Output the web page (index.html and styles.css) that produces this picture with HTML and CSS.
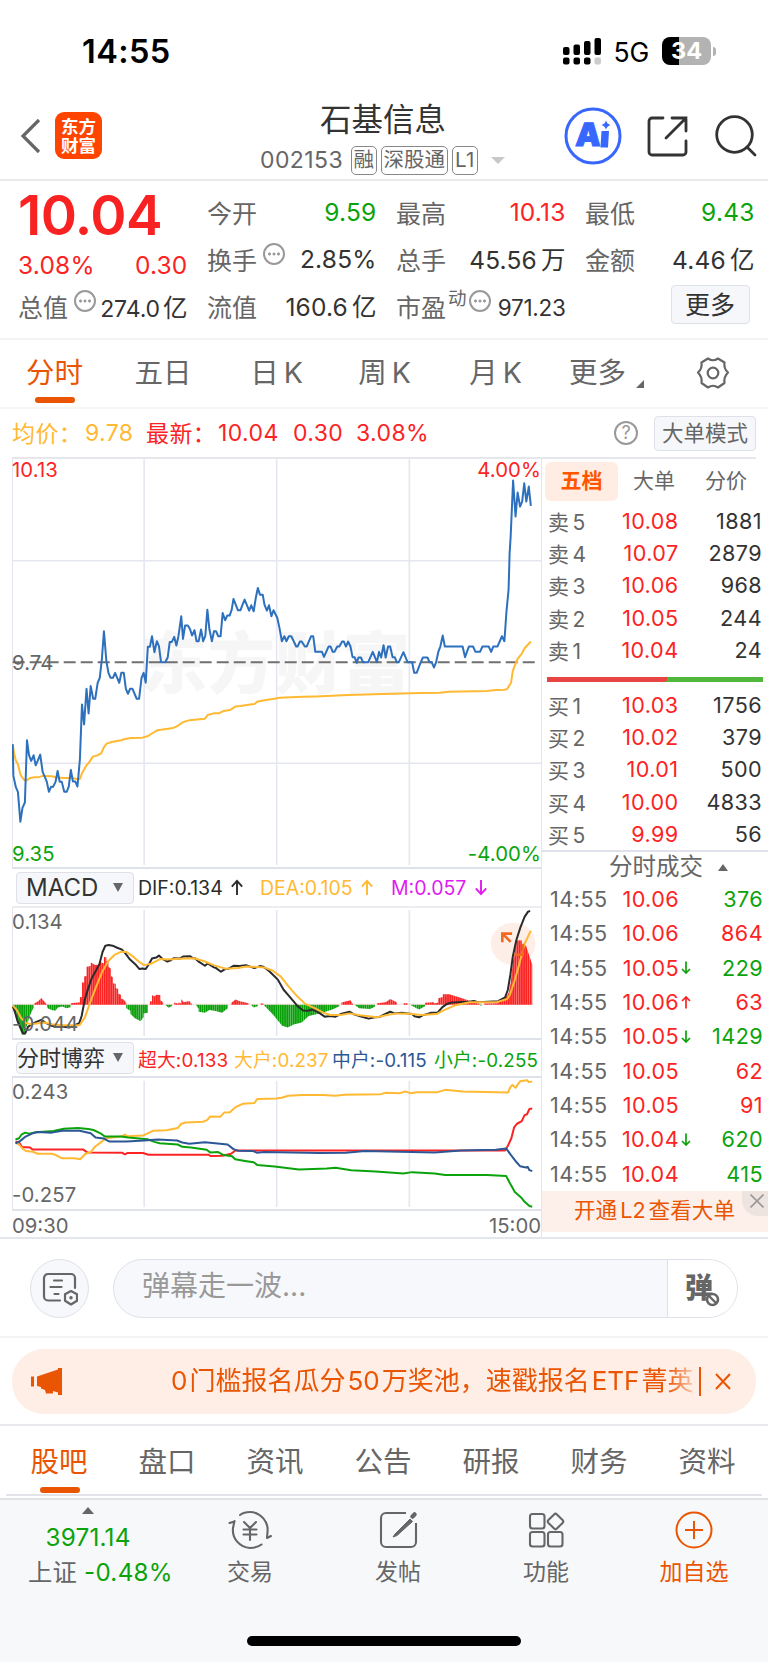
FILE: index.html
```html
<!DOCTYPE html>
<html lang="zh-CN">
<head>
<meta charset="utf-8">
<title>石基信息 002153</title>
<link rel="stylesheet" href="styles.css">
</head>
<body>
<div class="app">
  <div class="status">
    <span class="clock">14:55</span>
    <svg class="signal" width="39" height="27" viewBox="0 0 39 27">
      <g fill="#000"><rect x="0" y="9" width="6.5" height="8" rx="2"/><rect x="10.5" y="6.500" width="6.500" height="10.500" rx="2"/><rect x="21" y="3" width="6.500" height="14" rx="2"/><rect x="31.500" y="0" width="6.500" height="17" rx="2"/>
      <rect x="0" y="19.500" width="6.500" height="7" rx="2"/><rect x="10.500" y="19.500" width="6.500" height="7" rx="2"/><rect x="21" y="19.500" width="6.500" height="7" rx="2"/></g>
      <rect x="31.500" y="19.500" width="6.500" height="7" rx="2" fill="#ccc"/>
    </svg>
    <span class="net">5G</span>
    <span class="battery">34</span><i class="battery-cap"></i>
  </div>

  <header class="nav">
    <svg class="back" width="22" height="36" viewBox="0 0 22 36"><path d="M19 2 3 18l16 16" fill="none" stroke="#666" stroke-width="3.200"/></svg>
    <div class="logo"><span>东方</span><span>财富</span></div>
    <div class="title">
      <h1>石基信息</h1>
      <div class="sub"><span class="code">002153</span><b>融</b><b>深股通</b><b>L1</b><i></i></div>
    </div>
    <div class="nav-icons">
      <svg width="58" height="58" viewBox="0 0 58 58"><circle cx="29" cy="29" r="27" fill="none" stroke="#3767ff" stroke-width="3"/>
        <text class="ai" x="11" y="39.500" transform="skewX(-3) translate(2 0)">A</text>
        <path d="M37.500 24h7.500l-1 16.500h-7.500z" fill="#3767ff"/><path d="M42 13.500q1 3.500 4.500 4.500-3.500 1-4.500 4.500-1-3.500-4.500-4.500 3.500-1 4.500-4.500z" fill="#3767ff"/></svg>
      <svg class="share" width="42" height="42" viewBox="0 0 42 42"><path d="M16 3H5a3 3 0 0 0-3 3v31a3 3 0 0 0 3 3h31a3 3 0 0 0 3-3V26M39 16V3H25M39 3 19 23" fill="none" stroke="#333" stroke-width="2.800" stroke-linecap="round"/></svg>
      <svg class="search" width="42" height="42" viewBox="0 0 42 42"><circle cx="19.500" cy="19.500" r="17.800" fill="none" stroke="#333" stroke-width="2.800"/><path d="m32 32 8 8" stroke="#333" stroke-width="2.800" stroke-linecap="round"/></svg>
    </div>
  </header>

  <section class="quote">
    <div class="cell price">10.04</div>
    <div class="cell"><label>今开</label><span class="g">9.59</span></div>
    <div class="cell"><label>最高</label><span class="r">10.13</span></div>
    <div class="cell"><label>最低</label><span class="g">9.43</span></div>
    <div class="cell change r"><span>3.08%</span><span>0.30</span></div>
    <div class="cell"><label>换手<i class="dots"></i></label><span>2.85%</span></div>
    <div class="cell"><label>总手</label><span>45.56<em>万</em></span></div>
    <div class="cell"><label>金额</label><span>4.46<em>亿</em></span></div>
    <div class="cell"><label>总值<i class="dots"></i></label><span class="tight">274.0<em>亿</em></span></div>
    <div class="cell"><label>流值</label><span>160.6<em>亿</em></span></div>
    <div class="cell"><label>市盈<sup>动</sup><i class="dots near"></i></label><span class="small">971.23</span></div>
    <div class="cell end"><button class="more">更多</button></div>
  </section>

  <nav class="periods">
    <a class="on">分时</a><a>五日</a><a>日<s></s>K</a><a>周<s></s>K</a><a>月<s></s>K</a><a class="menu">更多</a>
    <a><svg width="34" height="34" viewBox="0 0 34 34" fill="none" stroke="#666" stroke-width="2.200" stroke-linejoin="round"><path d="M12 2.500Q17 6 22 2.500L28.500 6.500Q27.500 12.500 32 16.500Q27.500 21 28.500 27L22 31.500Q17 28 12 31.500L5.500 27Q6.500 21 2 16.500Q6.500 12.500 5.500 6.500Z"/><circle cx="17" cy="17" r="5.300"/></svg></a>
  </nav>

  <div class="info">
    <span class="y c">均价：</span><span class="y v1">9.78</span><span class="r c v2">最新：</span><span class="r v3">10.04</span><span class="r v4">0.30</span><span class="r v5">3.08%</span>
    <span class="help">?</span><button class="mode">大单模式</button>
  </div>

  <main class="market">
    <div class="charts">
      <div class="chart main-chart">
        <div class="watermark">东方财富</div>
        <svg class="plot" viewBox="36 -519 1522 1233" preserveAspectRatio="none">
          <path class="grid" d="M36-207H1558M36 402H1558M415.500-512V708M796-512V708M1177-512V708"/>
          <path class="dash" d="M38 98H1548"/>
          <path class="line y" d="M38 345 42 372 47 394 53 405 60 435 66 446 73 454 79 453 86 447 100 444 115 443 125 440 150 441 165 445 186 446 210 446 220 449 231 449 237 432 250 408 257 400 268 382 280 379 292 372 301 352 308 343 322 338 350 333 360 329 378 326 410 325 425 321 440 311 453 303 495 297 508 292 528 278 545 273 590 268 598 257 615 252 630 252 643 245 662 242 678 231 692 230 710 227 732 224 742 216 765 212 785 209 805 205 870 202 910 201 1000 197 1100 194 1210 191 1265 190 1290 187 1400 185 1425 182 1450 181 1458 179 1469 160 1474 125 1481 105 1488 88 1500 72 1508 56 1518 45 1526 36"/>
          <path class="line blue" d="M38 345 40 440 47 474 53 488 60 578 66 536 73 520 79 333 85 378 91 395 98 378 104 408 110 394 117 376 124 428 130 442 136 458 142 488 148 473 154 473 161 458 167 425 173 458 179 458 186 488 193 488 199 472 205 422 211 457 218 457 224 472 231 390 237 225 243 285 250 178 256 252 262 170 269 208 275 208 282 160 288 145 294 90 300 5 307 95 313 130 319 145 326 145 332 130 344 160 350 130 357 130 363 178 369 193 375 178 382 178 394 208 401 208 408 145 414 130 420 160 426 52 432 52 438 20 445 68 452 35 458 50 464 98 476 98 483 84 489 37 495 37 502 22 508 48 514 20 522-40 527 28 533-12 541-12 547-2 553 18 560 2 566 35 572 35 579 0 585 35 591 20 597-60 603 0 610 35 616 5 622 5 628 20 635 20 641-50 648-28 654-42 661-42 667-60 672-92 685-58 692-58 698-75 704-90 717-57 723-73 730-55 736-95 742-125 748-105 756-105 761-75 768-57 774-73 781-40 787-58 798-35 804-5 811 35 818 20 824 35 831 20 838 20 845 35 852 51 856 51 863 36 868 36 877 51 882 51 895 20 901 20 907 67 926 67 932 82 945 51 951 51 957 67 962 67 970 51 976 51 984 36 989 36 995 51 1001 36 1008 51 1014 83 1020 83 1026 100 1031 84 1038 84 1044 98 1059 98 1072 67 1084 98 1090 67 1096 84 1103 47 1109 84 1116 51 1122 51 1129 83 1135 83 1141 98 1147 98 1160 68 1172 98 1185 98 1191 130 1198 130 1210 98 1216 84 1229 84 1235 98 1241 98 1248 114 1254 98 1260 68 1266 51 1273 18 1279 51 1330 51 1337 83 1348 51 1360 51 1367 67 1380 67 1387 51 1405 51 1412 67 1418 51 1430 51 1443 20 1450 35 1456-55 1462-120 1465-230 1468-280 1475-448 1482-340 1488-412 1495-370 1501-385 1507-440 1513-385 1520-430 1526-372"/>
        </svg>
        <span class="lab tl r">10.13</span><span class="lab tr r">4.00%</span><span class="lab mid">9.74</span><span class="lab bl g">9.35</span><span class="lab br g">-4.00%</span>
      </div>
      <div class="legend">
        <button class="pick">MACD<i></i></button><span class="k l1">DIF:0.134 <svg class="ar" viewBox="0 0 14 18"><path d="M7 17V2M1.500 8 7 2l5.500 6"/></svg></span><span class="y l2">DEA:0.105 <svg class="ar" viewBox="0 0 14 18"><path d="M7 17V2M1.500 8 7 2l5.500 6"/></svg></span><span class="m l3">M:0.057 <svg class="ar" viewBox="0 0 14 18"><path d="M7 1v15M1.500 10 7 16l5.500-6"/></svg></span>
      </div>
      <div class="chart macd">
        <svg class="plot" viewBox="36 141 1522 396" preserveAspectRatio="none">
          <defs>
            <pattern id="up" width="6.240" height="600" patternUnits="userSpaceOnUse" x="38"><rect width="5.500" height="600" fill="#fb2222"/></pattern>
            <pattern id="down" width="6.240" height="600" patternUnits="userSpaceOnUse" x="38"><rect width="5.500" height="600" fill="#08a008"/></pattern>
          </defs>
          <path class="grid" d="M415.500 147V531M796 147V531M1177 147V531"/>
          <circle cx="1475" cy="250" r="64" fill="#fdeee7"/>
          <path d="M38 434H1532" stroke="#fbb" stroke-width="1.500"/>
          <path fill="url(#up)" d="M100 436V432L112 424 120 415 132 430 136 436ZM205 436V431L231 428V413L237 412V368H243V350L250 348V320L262 318V307L275 315 287 313V305L300 310V290L307 291V303H313V321L320 325V348L326 352V370L334 372V385L341 388V402L349 405V417L356 420 364 430V436ZM432 436V425H438V407L445 410 451 405 462 406V422L470 428V436ZM502 436V429L514 433V429L522 432V418L529 428 545 424 553 434V436ZM666 436V430L678 420 688 424 715 431V436ZM750 436V432H758V436ZM982 436V429L1008 422 1016 436ZM1084 436V431L1109 428 1122 418 1141 428V436ZM1160 436V431H1172V436ZM1222 436V430L1248 428V432L1260 429V416L1273 412V404L1292 404 1335 418 1380 434V436ZM1392 436V432L1430 431 1455 412 1462 400 1468 370 1475 300 1481 280V245L1488 239 1500 240V252L1512 255 1522 288 1530 312V436Z"/>
          <path fill="url(#down)" d="M38 436H98V444L91 460 85 475 79 498 73 515V526H64L52 490 45 465ZM136 436H204V443L192 446 180 441 168 444 160 454 150 452 138 446ZM364 436H426V460L414 462V473L405 486 388 476 376 463V454L364 446ZM476 436H496V439L486 445ZM564 436H656V446L639 460 620 455 603 452 590 460 572 457V448ZM722 436H742V440L730 444ZM758 436H976V440L956 450 920 462 888 470 868 490 845 496 828 505 812 500 798 482 786 466ZM1020 436H1078V442L1064 449 1033 446ZM1180 436H1222V440L1205 450 1192 443ZM1380 436H1386V438H1380Z"/>
          <path class="line k" d="M38 440 45 460 52 486 60 505 68 523 74 523 82 503 93 495 106 488 120 482 132 490 150 500 165 503 180 502 200 505 215 499 229 492 236 470 245 420 255 385 265 355 278 330 287 312 296 275 304 256 314 254 328 257 338 262 352 268 362 280 375 298 390 312 402 327 410 325 420 327 430 311 438 295 450 292 458 286 467 295 482 304 492 300 500 294 518 295 527 289 548 288 556 294 562 294 570 303 590 317 598 310 616 322 622 324 636 335 647 328 660 325 672 317 690 318 708 315 732 324 748 318 758 320 774 333 786 345 800 360 816 390 830 407 844 425 856 440 872 453 886 454 898 450 915 458 934 472 950 470 965 472 980 464 1006 457 1018 465 1036 471 1060 478 1078 474 1092 473 1104 466 1122 457 1134 462 1155 460 1172 462 1185 464 1192 471 1205 474 1215 468 1240 460 1258 460 1272 443 1284 434 1298 429 1330 427 1345 427 1362 424 1375 428 1432 425 1452 413 1460 390 1467 345 1474 290 1484 240 1496 200 1508 168 1518 152 1524 150"/>
          <path class="line y" d="M38 438 50 452 62 476 76 491 90 495 130 490 150 495 180 498 230 498 245 475 260 430 278 380 295 335 312 303 330 284 350 274 365 275 385 290 400 304 415 315 435 311 462 296 480 298 530 295 560 294 590 304 615 315 650 326 685 324 710 319 760 322 785 332 808 350 830 380 855 410 878 433 905 446 930 460 950 467 980 467 1005 462 1035 468 1085 474 1110 468 1140 462 1180 463 1210 467 1255 464 1275 453 1310 437 1350 428 1430 427 1458 418 1466 405 1480 360 1492 315 1508 250 1526 210"/>
          <path d="M1444 245V219H1472M1445 220 1468 244M1503 250V283H1478" fill="none" stroke="#f26a20" stroke-width="2.600" vector-effect="non-scaling-stroke"/>
        </svg>
        <span class="lab tl">0.134</span><span class="lab bl low">-0.044</span>
      </div>
      <div class="legend second">
        <button class="pick cjk">分时博弈<i></i></button><span class="r s1">超大:0.133</span><span class="y s2">大户:0.237</span><span class="n s3">中户:-0.115</span><span class="g s4">小户:-0.255</span>
      </div>
      <div class="chart game">
        <svg class="plot" viewBox="36 112 1522 398" preserveAspectRatio="none">
          <path class="grid" d="M415.500 120V504M796 120V504M1177 120V504"/>
          <path class="line r" d="M46 305 57 309 65 322 88 323 95 329 240 329 252 338 352 339 360 344 367 340 412 340 428 345 600 345 606 349 640 348 665 342 678 332 1452 332 1460 318 1470 295 1478 262 1486 251 1500 243 1508 225 1515 222 1522 206 1530 205"/>
          <path class="line y" d="M46 308 55 313 65 325 76 334 96 336 110 342 150 342 162 346 180 356 215 356 232 359 246 343 262 337 275 320 292 307 305 295 350 290 360 284 367 289 412 287 430 278 442 272 480 271 512 264 522 251 535 247 585 245 597 239 605 229 634 230 645 217 662 216 676 202 685 197 700 190 732 188 740 176 795 174 810 172 830 166 870 164 930 164 965 166 990 163 1095 161 1110 157 1150 158 1165 153 1180 158 1200 155 1258 155 1280 148 1330 153 1460 156 1467 140 1473 133 1482 142 1495 122 1515 119 1520 124 1530 123"/>
          <path class="line g" d="M46 299 56 295 64 283 74 278 85 281 105 277 155 273 185 266 225 264 255 267 270 270 290 280 303 290 350 290 370 293 425 298 445 306 460 310 512 314 525 321 550 323 595 330 605 338 628 337 644 346 668 350 677 359 705 364 730 368 740 376 790 381 860 390 940 387 965 385 1010 392 1080 396 1160 402 1185 398 1250 402 1280 407 1400 407 1455 410 1464 428 1480 458 1498 475 1508 488 1522 501 1530 503"/>
          <path class="line n" d="M46 311 60 303 75 290 95 280 110 276 150 278 180 272 230 272 262 280 276 293 300 296 316 305 365 305 415 302 455 299 510 302 525 308 545 312 590 307 655 314 672 328 685 333 728 334 740 339 760 337 920 340 995 339 1050 334 1250 338 1325 332 1425 330 1455 326 1468 345 1485 368 1495 380 1512 384 1517 382 1522 392 1530 395"/>
        </svg>
        <span class="lab tl">0.243</span><span class="lab bl">-0.257</span>
      </div>
      <div class="times"><span>09:30</span><span>15:00</span></div>
    </div>

    <aside class="book">
      <div class="book-tabs"><a class="on">五档</a><a>大单</a><a>分价</a></div>
      <div class="levels">
        <div><label>卖<s></s>5</label><b>10.08</b><span>1881</span></div>
        <div><label>卖<s></s>4</label><b>10.07</b><span>2879</span></div>
        <div><label>卖<s></s>3</label><b>10.06</b><span>968</span></div>
        <div><label>卖<s></s>2</label><b>10.05</b><span>244</span></div>
        <div><label>卖<s></s>1</label><b>10.04</b><span>24</span></div>
      </div>
      <div class="ratio"></div>
      <div class="levels">
        <div><label>买<s></s>1</label><b>10.03</b><span>1756</span></div>
        <div><label>买<s></s>2</label><b>10.02</b><span>379</span></div>
        <div><label>买<s></s>3</label><b>10.01</b><span>500</span></div>
        <div><label>买<s></s>4</label><b>10.00</b><span>4833</span></div>
        <div><label>买<s></s>5</label><b>9.99</b><span>56</span></div>
      </div>
      <div class="deals-head">分时成交<i></i></div>
      <div class="deals">
        <div><time>14:55</time><b>10.06</b><span class="g">376</span></div>
        <div><time>14:55</time><b>10.06</b><span class="r">864</span></div>
        <div><time>14:55</time><b>10.05</b><svg class="g" viewBox="0 0 10 13"><path d="M5 .500V12M1 8l4 4 4-4"/></svg><span class="g">229</span></div>
        <div><time>14:55</time><b>10.06</b><svg class="r" viewBox="0 0 10 13"><path d="M5 12.500V1M1 5l4-4 4 4"/></svg><span class="r">63</span></div>
        <div><time>14:55</time><b>10.05</b><svg class="g" viewBox="0 0 10 13"><path d="M5 .500V12M1 8l4 4 4-4"/></svg><span class="g">1429</span></div>
        <div><time>14:55</time><b>10.05</b><span class="r">62</span></div>
        <div><time>14:55</time><b>10.05</b><span class="r">91</span></div>
        <div><time>14:55</time><b>10.04</b><svg class="g" viewBox="0 0 10 13"><path d="M5 .500V12M1 8l4 4 4-4"/></svg><span class="g">620</span></div>
        <div><time>14:55</time><b>10.04</b><span class="g">415</span></div>
      </div>
      <div class="l2">开通<s></s>L2<s></s>查看大单<i><svg width="14" height="14" viewBox="0 0 14 14"><path d="m.500.500 13 13M13.500.500l-13 13" stroke="#999" stroke-width="1.600"/></svg></i></div>
    </aside>
  </main>

  <section class="danmu">
    <div class="round"><svg width="36" height="34" viewBox="0 0 36 34" fill="none" stroke="#666" stroke-width="2.200" stroke-linecap="round"><path d="M18 28.500H6a4 4 0 0 1-4-4V6a4 4 0 0 1 4-4h23a4 4 0 0 1 4 4v10M12 8.500h8M8.500 15h11M12.500 22h4"/><path d="m29 19 6 3.300v6.400L29 32.500l-6-3.800v-6.400z" stroke-linejoin="round"/><circle cx="29" cy="25.700" r="1" fill="#666" stroke-width="1.500"/></svg></div>
    <div class="input"><span>弹幕走一波...</span><div class="toggle">弹<svg width="15" height="15" viewBox="0 0 15 15"><circle cx="7.500" cy="7.500" r="5.500" fill="#fff" stroke="#666" stroke-width="2.600"/><path d="m4 4 7 7" stroke="#666" stroke-width="2.400"/></svg></div></div>
  </section>

  <section class="notice-wrap">
    <div class="notice">
      <svg class="horn" width="32" height="27" viewBox="0 0 32 27" fill="#ea5504"><path d="M0 8.500h3v10H0zM6 8.500 27 1.500V0h4v27h-4v-2.500L22 23v2.500h-7L14 22l-4-1.500V19l-4-1z"/></svg>
      <div class="marquee">0<s></s>门槛报名瓜分<s></s>50<s></s>万奖池，速戳报名<s></s>ETF<s></s>菁英</div>
      <i class="bar"></i>
      <svg class="close" width="16" height="17" viewBox="0 0 16 17"><path d="m1 1 14 15M15 1 1 16" stroke="#ea5504" stroke-width="2"/></svg>
    </div>
  </section>

  <nav class="sections"><a class="on">股吧</a><a>盘口</a><a>资讯</a><a>公告</a><a>研报</a><a>财务</a><a>资料</a></nav>

  <footer class="bottom">
    <div class="index"><i></i><div class="g num">3971.14</div><div class="row">上证<span class="g">-0.48%</span></div></div>
    <a><svg width="44" height="40" viewBox="0 0 44 40" fill="none" stroke="#666" stroke-width="2.100" stroke-linecap="round"><path d="M12 5Q16 2 22 2a18 18 0 0 1 17.500 20l-.500 6M39 28l4-2M33.500 34.500Q29 38 22 38A18 18 0 0 1 5 18l1.500-7M6.500 11.500 1.500 13"/><path d="m16 12 6 6 6-6M22 18v12M15.500 19.500h13M15.500 24.500h13"/></svg>交易</a>
    <a><svg width="40" height="40" viewBox="0 0 40 40" fill="none" stroke="#666" stroke-width="2.100"><path d="M28 3H8a5 5 0 0 0-5 5v24a5 5 0 0 0 5 5h25a5 5 0 0 0 5-5V13"/><path d="m17 24 15-15 2.500 2.500L19 25.500l-4 1.500z" fill="#666" stroke-width="1"/><path d="m34.500 6.500 2-2" stroke-width="4.500" stroke-linecap="round"/></svg>发帖</a>
    <a><svg width="40" height="40" viewBox="0 0 40 40" fill="none" stroke="#666" stroke-width="2.100"><rect x="4" y="4" width="14.500" height="14.500" rx="2.500"/><rect x="4" y="22" width="14.500" height="14.500" rx="2.500"/><rect x="22" y="22" width="14.500" height="14.500" rx="2.500"/><rect x="23.500" y="5.500" width="12" height="12" rx="2" transform="rotate(45 29.500 11.500)"/></svg>功能</a>
    <a class="add"><svg width="40" height="40" viewBox="0 0 40 40" fill="none" stroke="#ea5504" stroke-width="2"><circle cx="20" cy="20" r="17.500"/><path d="M11 20h18M20 11v18"/></svg>加自选</a>
    <div class="home"></div>
  </footer>
</div>
</body>
</html>
```
FILE: styles.css
```css
* { box-sizing: border-box; }
body { margin: 0; background: #fff; }
.app { width: 768px; height: 1663px; overflow: hidden; font-family: "Inter", "Noto Sans CJK SC", sans-serif; color: #333; display: flex; flex-direction: column; }
.app > * { flex: none; }
h1, b, i, em { font-weight: 400; font-style: normal; margin: 0; }
s { display: inline-block; width: 5px; }
button { font: inherit; padding: 0; color: #333; background: #f6f7fa; border: 1.5px solid #dfe1e8; border-radius: 4px; }
.r { color: #fb2323; }
.g { color: #0ba30b; }
.y { color: #ffb932; }
.k { color: #2b2b2b; }
.m { color: #df1bef; }
.n { color: #2c5797; }

/* status bar */
.status { height: 102px; padding: 0 52px 0 82px; display: flex; align-items: center; }
.clock { font-size: 32.5px; font-weight: 600; color: #000; letter-spacing: .4px; padding-top: 1px; }
.signal { margin-left: auto; }
.net { margin: 0 13px 0 12px; font-size: 26.5px; color: #000; letter-spacing: -.2px; padding-top: 1px; }
.battery { width: 49px; height: 28px; border-radius: 8px; background: linear-gradient(90deg, #000 17px, #b3b3b3 17px); color: #fff; font-size: 23.5px; font-weight: 700; line-height: 28px; text-align: center; }
.battery-cap { width: 3px; height: 9px; margin-left: 2px; background: #b3b3b3; border-radius: 0 4px 4px 0; }

/* nav */
.nav { height: 79px; border-bottom: 2px solid #ebebec; display: flex; position: relative; padding-left: 20px; }
.back { margin-top: 16px; }
.logo { width: 47px; height: 47px; margin: 10px 0 0 13px; background: #ff4400; border-radius: 9px; color: #fff; font-size: 17.5px; font-weight: 700; line-height: 19px; display: flex; flex-direction: column; align-items: center; justify-content: center; }
.title { width: 246px; margin-left: 158px; }
.title h1 { font-size: 31.5px; line-height: 35px; text-align: center; letter-spacing: 0; }
.sub { display: flex; align-items: center; height: 30px; margin-top: 8px; color: #666; font-size: 22px; }
.code { font-size: 23px; margin-right: 5px; width: 86px; letter-spacing: .4px; }
.sub b { height: 29px; border: 1.5px solid #888; border-radius: 5px; font-size: 20.5px; line-height: 25px; padding: 0 1.5px; margin-right: 4px; flex: none; }
.sub b:nth-of-type(2) { padding: 0 2px; }
.sub b:nth-of-type(3) { padding: 0 2px; letter-spacing: .3px; }
.sub i { border: 7px solid transparent; border-top: 7px solid #c8c8c8; border-bottom: 0; margin-left: 9px; }
.nav-icons { display: flex; margin-left: 58px; margin-top: 5px; }
.ai { font: 900 32px "Inter", sans-serif; fill: #3767ff; stroke: #3767ff; stroke-width: 1px; }
.share { margin: 8px 0 0 25px; }
.search { margin: 8px 0 0 26px; }

/* quote */
.quote { height: 159px; border-bottom: 2px solid #f3f3f4; padding: 7px 13px 0 18px; display: grid; grid-template-columns: repeat(4, 169.5px); grid-template-rows: 47px 47px 47px; column-gap: 19.5px; font-size: 24.5px; }
.cell { display: flex; justify-content: space-between; align-items: center; white-space: nowrap; }
.cell label { font-size: 25px; color: #666; display: flex; align-items: center; }
.cell > span { letter-spacing: .2px; }
.cell em { margin-left: 4px; font-size: 24.5px; letter-spacing: 0; }
.cell.price { font-size: 55px; font-weight: 600; color: #f92222; letter-spacing: -.6px; padding-top: 7px; }
.cell.change { padding-top: 13px; }
.cell .tight { font-size: 23px; letter-spacing: -.1px; padding-top: 2px; }
.cell .tight em { margin-left: 3px; }
.cell .small { font-size: 22.5px; padding-top: 4px; letter-spacing: -.3px; }
.cell.end { justify-content: flex-end; padding-right: 5px; padding-bottom: 2px; }
.cell sup { font-size: 18.5px; line-height: 18px; margin: -16px 0 0 2px; }
.dots { width: 22px; height: 22px; border: 2px solid #999; border-radius: 50%; margin: -9px 0 0 6px; background: radial-gradient(circle, #999 1.3px, transparent 1.8px) center / 4.5px 18px repeat-x; background-clip: content-box; padding: 0 2px; }
.dots.near { margin-left: 2px; }
.more { width: 79px; height: 39px; font-size: 25px; line-height: 34px; }

/* periods */
.periods { height: 69px; border-bottom: 2px solid #f5f5f6; display: grid; grid-template-columns: 109px 108px 119px 97px 125px 98px 112px; font-size: 28.5px; line-height: 66px; text-align: center; color: #666; }
.periods a { position: relative; height: 67px; }
.periods svg { display: block; margin: 16px 0 0 40px; }
.periods .on, .sections .on { color: #ea5504; }
.periods .on::after, .sections .on::after { content: ""; position: absolute; width: 40px; height: 6px; border-radius: 3px; background: #ea5504; left: 35px; bottom: 4px; }
.menu { text-align: left; padding-left: 11px; }
.menu::after { content: ""; position: absolute; right: 12px; bottom: 19px; border: 4.5px solid transparent; border-right-color: #666; border-bottom-color: #666; }

/* average and last price */
.info { height: 48px; padding: 0 12px; display: flex; align-items: center; font-size: 23px; letter-spacing: .4px; white-space: nowrap; }
.info span { flex: none; }
.info .c { padding-bottom: 2px; }
.info span:first-child { width: 73px; }
.v1 { width: 61px; }
.v2 { width: 72px; }
.v3 { width: 75px; }
.v4 { width: 63px; }
.info .help { width: 24px; height: 24px; margin-left: auto; border: 2px solid #999; border-radius: 50%; font-size: 18px; line-height: 20px; text-align: center; color: #999; letter-spacing: 0; }
.mode { width: 102px; height: 35px; margin-left: 16px; font-size: 21.5px; line-height: 31px; color: #666; letter-spacing: 0; }

/* charts */
.market { height: 782px; display: flex; border-bottom: 2px solid #e4e6ee; position: relative; }
.market::before { content: ""; position: absolute; left: 12px; top: 0; width: 744px; height: 1.5px; background: #e6e7ec; }
.charts { width: 542px; padding-left: 12px; border-right: 1.5px solid #e3e6ec; }
.chart { position: relative; border-left: 1.5px solid #e3e6ec; border-bottom: 2px solid #dfe2ea; }
.main-chart { height: 412px; }
.plot { position: absolute; left: -1px; top: 0; width: 530px; height: 100%; }
.grid { stroke: #e4e7f0; stroke-width: 1.6; fill: none; vector-effect: non-scaling-stroke; }
.dash { stroke: #707070; stroke-width: 2; stroke-dasharray: 12 5; vector-effect: non-scaling-stroke; }
.line { fill: none; stroke: currentColor; stroke-width: 2; stroke-linejoin: round; vector-effect: non-scaling-stroke; }
.blue { color: #2d70bd; }
.watermark { position: absolute; left: 127px; top: 159px; font-size: 67.5px; font-weight: 900; line-height: 95px; color: #f6f6f6; white-space: nowrap; }
.lab { position: absolute; font-size: 20.3px; line-height: 24px; color: #666; letter-spacing: .1px; }
.lab.r { color: #fb2323; }
.lab.g { color: #0ba30b; }
.tl { left: -1px; top: 2px; }
.tr { right: 0; top: 2px; }
.main-chart .tl, .main-chart .tr { top: 1px; }
.mid { left: -1px; top: 194px; }
.bl { left: -1px; bottom: 1px; }
.br { right: 0; bottom: 1px; }
.legend { height: 39px; border-bottom: 2px solid #ebedf1; display: flex; align-items: center; font-size: 19.5px; white-space: nowrap; padding-left: 4px; }
.pick { width: 118px; height: 32px; margin-right: 4px; font-size: 24px; line-height: 28px; text-align: left; padding-left: 9px; position: relative; flex: none; }
.pick i { position: absolute; right: 10px; top: 10px; border: 5px solid transparent; border-top: 9px solid #666; border-bottom: 0; }
.pick.cjk { font-size: 22px; padding-left: 0; }
.ar { width: 14px; height: 17px; fill: none; stroke: currentColor; stroke-width: 2; vertical-align: -1px; margin-left: 2px; }
.l1 { width: 122px; }
.legend .l2 { width: 131px; }
.macd { height: 132px; }
.macd .low { bottom: 2px; }
.second { height: 38px; font-size: 18.8px; border-color: #dfe2ea; letter-spacing: .15px; }
.s1 { width: 96px; }
.s2 { width: 98px; }
.s3 { width: 102px; }
.game { height: 133px; }
.game .bl { bottom: 2px; }
.times { display: flex; justify-content: space-between; font-size: 20.3px; line-height: 30px; color: #666; }

/* order book */
.book { width: 226px; color: #333; }
.book-tabs { display: flex; padding: 5px 0 0 3px; font-size: 21px; line-height: 38px; color: #666; text-align: center; }
.book-tabs a { width: 72px; height: 39px; }
.book-tabs .on { color: #ff5500; background: #ffede4; border-radius: 6px; font-weight: 700; width: 73px; }
.levels { padding: 4px 6px 0 6px; font-size: 21.6px; }
.levels div { height: 32.2px; display: grid; grid-template-columns: 50px 80.5px 1fr; align-items: center; text-align: right; letter-spacing: .4px; }
.levels label { text-align: left; color: #666; font-size: 21px; }
.levels s { width: 3px; }
.levels b, .deals b { color: #fb2323; }
.ratio { height: 5px; margin: 11px 5px 3px 5px; background: linear-gradient(110deg, #e94444 55.5%, #52b83c 55.5%); }
.deals-head { height: 32px; border-top: 2px solid #dfe2ea; color: #666; font-size: 23.5px; line-height: 30px; padding-left: 67px; display: flex; }
.deals-head i { border: 5px solid transparent; border-bottom: 7px solid #666; border-top: 0; height: 7px; margin: 12px 0 0 15px; }
.deals { height: 309px; padding: 0 5px 0 8px; font-size: 21.6px; }
.deals div { height: 34.35px; display: flex; align-items: center; letter-spacing: .4px; }
.deals time { color: #666; width: 56px; letter-spacing: .5px; }
.deals b { width: 73px; text-align: right; }
.deals span { margin-left: auto; }
.deals svg { width: 10px; height: 13px; margin-left: 2px; fill: none; stroke: currentColor; stroke-width: 1.7; }
.book .l2 { height: 41px; background: #fdf0ea; color: #ea5504; font-size: 21.6px; line-height: 38px; padding-left: 32px; position: relative; }
.l2 s { width: 3px; }
.l2 i { position: absolute; right: 0; top: 0; width: 26px; height: 25px; background: #ede3df; border-bottom-left-radius: 16px; display: flex; align-items: center; justify-content: center; padding: 0 0 4px 4px; }

/* comments */
.danmu { height: 99px; border-bottom: 2px solid #f4f4f5; display: flex; align-items: flex-start; padding: 20px 30px; }
.round { width: 59px; height: 59px; border: 1.5px solid #dfe1e8; border-radius: 50%; background: #f7f8fb; display: flex; align-items: center; justify-content: center; }
.input { width: 625px; height: 59px; margin-left: 24px; border: 1.5px solid #dfe1e8; border-radius: 30px; background: #f7f8fb; color: #999; font-size: 28px; line-height: 52px; padding-left: 28px; display: flex; justify-content: space-between; overflow: hidden; }
.toggle { width: 70px; background: #fff; border-left: 1.5px solid #dfe1e8; color: #666; font-weight: 900; font-size: 28px; line-height: 56px; padding-left: 17px; position: relative; }
.toggle svg { position: absolute; left: 37px; top: 32px; }

/* notice */
.notice-wrap { height: 88px; border-bottom: 2px solid #e8e9ed; padding: 11px 12px; }
.notice { height: 65px; border-radius: 32px; background: #feeee6; display: flex; align-items: center; padding-left: 19px; color: #ea5504; }
.marquee { width: 527px; margin-left: 108px; font-size: 26px; line-height: 40px; padding-bottom: 2px; white-space: nowrap; -webkit-mask-image: linear-gradient(90deg, #000 497px, transparent 530px); mask-image: linear-gradient(90deg, #000 497px, transparent 530px); }
.marquee s { width: 2px; }
.bar { width: 1.5px; height: 29px; background: #ea5504; margin-left: 1px; }
.close { margin-left: 14px; }

/* section tabs */
.sections { height: 70px; margin: 0 6px; border-bottom: 2px solid #e2e4ea; display: flex; font-size: 28.5px; line-height: 71px; color: #666; text-align: center; }
.sections a { width: 108px; height: 68px; position: relative; left: -1px; }
.sections .on::after { left: 35px; bottom: 1px; }

/* bottom bar */
.bottom { height: 164px; margin-top: 2px; border-top: 2px solid #e3e3e5; background: #f7f8fa; position: relative; display: grid; grid-template-columns: 176px 148px 148px 148px 148px; align-content: start; }
.bottom a { display: flex; flex-direction: column; align-items: center; font-size: 23px; line-height: 34px; color: #666; padding-top: 10px; }
.bottom a svg { margin-bottom: 5px; }
.bottom .add { color: #ea5504; }
.index { font-size: 24.3px; line-height: 34px; letter-spacing: .2px; position: relative; text-align: center; padding-top: 20px; }
.index > i { position: absolute; left: 82px; top: 7px; border: 6.5px solid transparent; border-bottom: 7px solid #666; border-top: 0; }
.index .row { color: #666; text-align: left; padding-left: 28px; line-height: 36px; white-space: nowrap; }
.index .row span { margin-left: 7px; font-size: 24.2px; letter-spacing: .3px; }
.home { position: absolute; left: 247px; bottom: 16px; width: 274px; height: 10px; border-radius: 5px; background: #000; }
```
